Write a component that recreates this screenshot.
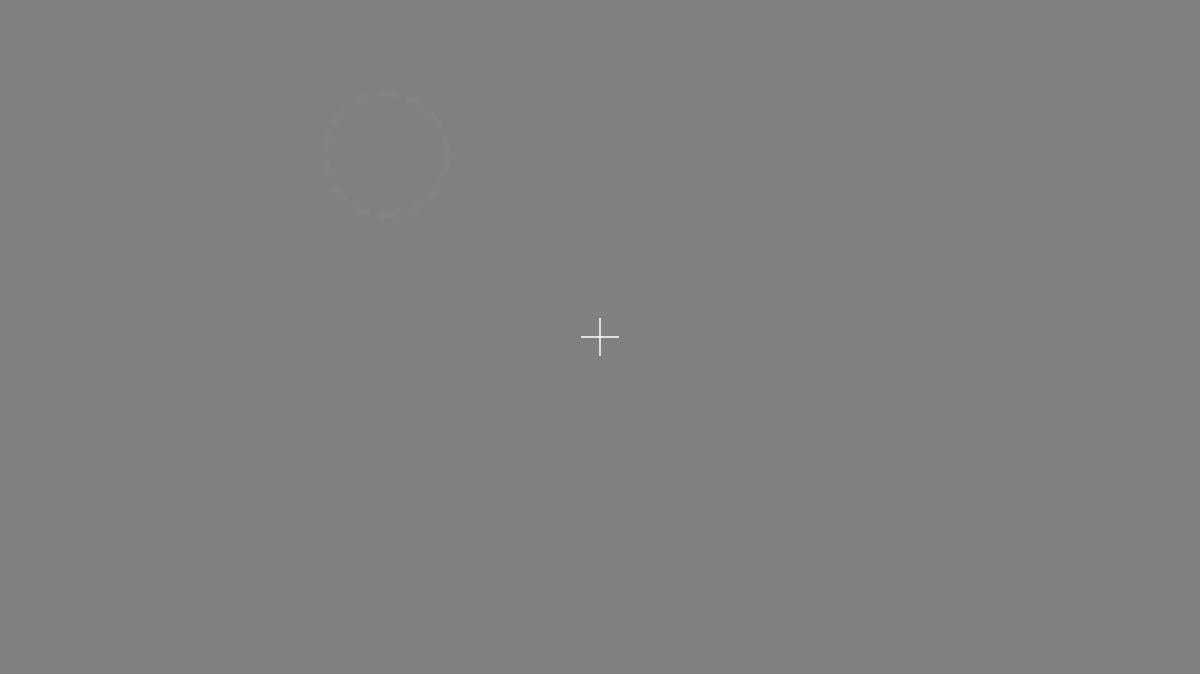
export default function App() {
  return (
    <div className="relative w-full h-[674px] bg-[#808080] overflow-hidden">
      <svg className="absolute left-[318px] top-[86px]" width="136" height="136" viewBox="0 0 136 136">
        <circle cx="68" cy="69" r="61" fill="none" stroke="#838383" strokeWidth="6" strokeDasharray="18 10" />
      </svg>
      <svg className="absolute left-[580px] top-[317px]" width="40" height="40" viewBox="0 0 40 40">
        <line x1="20" y1="1" x2="20" y2="39" stroke="#ffffff" strokeWidth="1.5" />
        <line x1="1" y1="20" x2="39" y2="20" stroke="#ffffff" strokeWidth="1.5" />
      </svg>
    </div>
  );
}
